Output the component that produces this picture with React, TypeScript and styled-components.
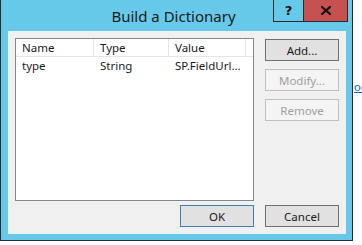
import React from 'react';
import styled, { createGlobalStyle } from 'styled-components';

const GlobalStyle = createGlobalStyle`
  html, body { margin: 0; padding: 0; background: #ffffff; }
  body { font-family: "Noto Sans", "Liberation Sans", sans-serif; }
  * { box-sizing: border-box; }
`;

const Page = styled.div`
  display: flex;
  align-items: flex-start;
  width: 362px;
  height: 245px;
  overflow: hidden;
  background: #ffffff;
`;

const Window = styled.div`
  flex: none;
  width: 353px;
  height: 241px;
  background: #67c9ea;
  border: 1px solid #2b2b2b;
  border-top: none;
  display: flex;
  flex-direction: column;
`;

const TitleBar = styled.div`
  height: 31px;
  display: grid;
  grid-template-columns: 1fr auto 1fr;
  align-items: center;
`;

const Title = styled.div`
  grid-column: 2;
  font-size: 15px;
  color: #1a1a1a;
  white-space: nowrap;
  padding-top: 1px;
  margin-right: 6px;
`;

const CaptionGroup = styled.div`
  grid-column: 3;
  justify-self: end;
  align-self: start;
  margin-right: 4px;
  display: flex;
  height: 22px;
  border: 1px solid #2b2b2b;
  border-top: none;
`;

const CaptionButton = styled.div<{ $close?: boolean }>`
  width: ${(p) => (p.$close ? 44 : 29)}px;
  height: 100%;
  display: flex;
  align-items: center;
  justify-content: center;
  background: ${(p) => (p.$close ? '#c75050' : 'transparent')};
  border-left: ${(p) => (p.$close ? '1px solid #2b2b2b' : 'none')};
  font-family: "DejaVu Sans", sans-serif;
  font-weight: bold;
  font-size: 13px;
  color: #111;
`;

const Body = styled.div`
  flex: 1;
  padding: 0 6px 6px 7px;
  display: flex;
`;

const Client = styled.div`
  flex: 1;
  background: #f0f0f0;
  padding: 7px 7px 7px 7px;
  display: grid;
  grid-template-columns: 239px 74px;
  grid-template-rows: 163px 22px;
  column-gap: 11px;
  row-gap: 4px;
  font-size: 11.5px;
  color: #1a1a1a;
`;

const List = styled.div`
  background: #ffffff;
  border: 1px solid #828790;
  display: flex;
  flex-direction: column;
`;

const Row = styled.div<{ $header?: boolean }>`
  display: grid;
  grid-template-columns: 78px 75px 77px 1fr;
  height: ${(p) => (p.$header ? 18 : 17)}px;
  border-bottom: ${(p) => (p.$header ? '1px solid #e5e5e5' : 'none')};
`;

const Cell = styled.div<{ $header?: boolean }>`
  padding-left: 6px;
  display: flex;
  align-items: center;
  white-space: nowrap;
  overflow: hidden;
  border-right: ${(p) => (p.$header ? '1px solid #e5e5e5' : 'none')};
  &:last-child { border-right: none; }
`;

const SideButtons = styled.div`
  display: flex;
  flex-direction: column;
  gap: 8px;
  padding-top: 1px;
`;

const Button = styled.div<{ $disabled?: boolean; $default?: boolean }>`
  width: 74px;
  height: 22px;
  display: flex;
  align-items: center;
  justify-content: center;
  font-size: 11.5px;
  background: ${(p) => (p.$disabled ? '#f4f4f4' : '#e1e1e1')};
  color: ${(p) => (p.$disabled ? '#a0a0a0' : '#1a1a1a')};
  border: 1px solid
    ${(p) => (p.$disabled ? '#bfbfbf' : p.$default ? '#3c7fb1' : '#707070')};
`;

const FooterLeft = styled.div`
  display: flex;
  justify-content: flex-end;
`;

const Aside = styled.div`
  padding-top: 79px;
  padding-left: 1px;
  font-size: 11px;
  color: #0066cc;
  text-decoration: underline;
  white-space: nowrap;
`;

const CloseIcon = () => (
  <svg width="10" height="9" viewBox="0 0 10 9">
    <path d="M1 1 L9 8 M9 1 L1 8" stroke="#111" strokeWidth="2.2" strokeLinecap="square" fill="none" />
  </svg>
);

export default function App() {
  return (
    <>
      <GlobalStyle />
      <Page>
        <Window>
          <TitleBar>
            <Title>Build a Dictionary</Title>
            <CaptionGroup>
              <CaptionButton>?</CaptionButton>
              <CaptionButton $close>
                <CloseIcon />
              </CaptionButton>
            </CaptionGroup>
          </TitleBar>
          <Body>
            <Client>
              <List>
                <Row $header>
                  <Cell $header>Name</Cell>
                  <Cell $header>Type</Cell>
                  <Cell $header>Value</Cell>
                  <Cell />
                </Row>
                <Row>
                  <Cell>type</Cell>
                  <Cell>String</Cell>
                  <Cell>SP.FieldUrl...</Cell>
                  <Cell />
                </Row>
              </List>
              <SideButtons>
                <Button>Add...</Button>
                <Button $disabled>Modify...</Button>
                <Button $disabled>Remove</Button>
              </SideButtons>
              <FooterLeft>
                <Button $default>OK</Button>
              </FooterLeft>
              <Button>Cancel</Button>
            </Client>
          </Body>
        </Window>
        <Aside>oc</Aside>
      </Page>
    </>
  );
}
